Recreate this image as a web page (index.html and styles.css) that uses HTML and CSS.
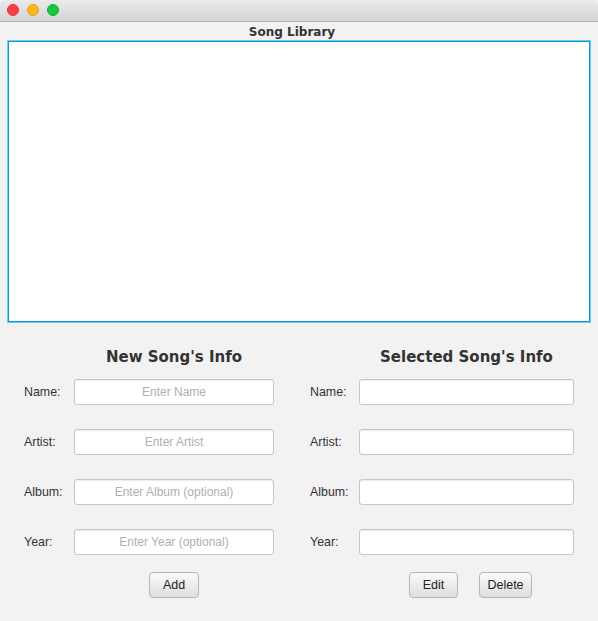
FILE: index.html
```html
<!DOCTYPE html>
<html>
<head>
<meta charset="utf-8">
<link rel="stylesheet" href="styles.css">
</head>
<body>
<div class="window">
  <div class="titlebar">
    <span class="light red"></span>
    <span class="light yellow"></span>
    <span class="light green"></span>
  </div>
  <div class="content">
    <div class="lib-title">Song Library</div>
    <div class="list"></div>
    <div class="form">
      <div class="col col-left">
        <h2 class="heading">New Song's Info</h2>
        <div class="row"><span class="label">Name:</span><input class="field" placeholder="Enter Name"></div>
        <div class="row"><span class="label">Artist:</span><input class="field" placeholder="Enter Artist"></div>
        <div class="row"><span class="label">Album:</span><input class="field" placeholder="Enter Album (optional)"></div>
        <div class="row"><span class="label">Year:</span><input class="field" placeholder="Enter Year (optional)"></div>
        <div class="buttons buttons-left"><button class="btn btn-add">Add</button></div>
      </div>
      <div class="col col-right">
        <h2 class="heading">Selected Song's Info</h2>
        <div class="row"><span class="label">Name:</span><input class="field"></div>
        <div class="row"><span class="label">Artist:</span><input class="field"></div>
        <div class="row"><span class="label">Album:</span><input class="field"></div>
        <div class="row"><span class="label">Year:</span><input class="field"></div>
        <div class="buttons buttons-right"><button class="btn btn-edit">Edit</button><button class="btn btn-delete">Delete</button></div>
      </div>
    </div>
  </div>
</div>
</body>
</html>
```
FILE: styles.css
```css
* { box-sizing: border-box; }
html, body { margin: 0; padding: 0; }
body {
  width: 598px;
  height: 621px;
  background: #f2f2f2;
  font-family: "Liberation Sans", Arial, sans-serif;
  overflow: hidden;
}
.window {
  width: 598px;
  height: 621px;
  background: #f2f2f2;
  border-radius: 5px 5px 0 0;
  overflow: hidden;
}
.titlebar {
  height: 22px;
  background: linear-gradient(#ebebeb, #d4d4d4);
  border-bottom: 1px solid #b1b1b1;
  display: flex;
  align-items: center;
  gap: 8px;
  padding-left: 7px;
  padding-bottom: 1px;
}
.light {
  width: 12px;
  height: 12px;
  border-radius: 50%;
  display: block;
}
.red { background: #fc3d48; border: 1px solid #e5343c; }
.yellow { background: #fdb61b; border: 1px solid #e3a212; }
.green { background: #19c73a; border: 1px solid #14ad2e; }
.content {
  padding: 0 8px;
}
.lib-title {
  height: 19px;
  line-height: 20px;
  text-align: center;
  font-family: "DejaVu Sans", sans-serif;
  font-weight: bold;
  font-size: 12px;
  color: #333;
  padding-right: 14px;
}
.list {
  height: 281px;
  background: #fff;
  border: 1px solid #0a9bd4;
  box-shadow: 0 0 0 1px #6fcaee;
  width: 582px;
}
.form {
  display: flex;
  gap: 36px;
  padding: 25px 0 0 16px;
}
.col {
  display: flex;
  flex-direction: column;
}
.col-left { width: 250px; }
.col-right { width: 264px; }
.heading {
  margin: 0 0 12px 0;
  height: 20px;
  line-height: 21px;
  font-family: "DejaVu Sans", sans-serif;
  font-weight: bold;
  font-size: 15px;
  color: #333;
  text-align: center;
}
.col-left .heading { padding-left: 50px; }
.col-right .heading { padding-left: 49px; }
.row {
  display: flex;
  align-items: center;
  height: 26px;
  margin-bottom: 24px;
}
.col-left .label { width: 50px; }
.col-right .label { width: 49px; }
.label {
  font-size: 12.4px;
  color: #333;
  flex: none;
}
.field {
  flex: 1;
  height: 26px;
  border: 1px solid #c6c6c6;
  border-radius: 3px;
  background: #fff;
  box-shadow: inset 0 1px 1px #ececec;
  font-family: "Liberation Sans", Arial, sans-serif;
  font-size: 12px;
  text-align: center;
  outline: none;
  padding: 0 6px;
}
.field::placeholder { color: #b0b0b0; }
.buttons {
  display: flex;
  margin-top: -7px;
}
.buttons-left { padding-left: 125px; }
.buttons-right { padding-left: 99px; gap: 21px; }
.btn {
  height: 26px;
  border: 1px solid #b6b6b6;
  border-radius: 4px;
  background: linear-gradient(#fafafa, #dedede);
  font-family: "Liberation Sans", Arial, sans-serif;
  font-size: 12.5px;
  color: #222;
  padding: 0;
}
.btn-add { width: 50px; }
.btn-edit { width: 49px; }
.btn-delete { width: 53px; }
```
